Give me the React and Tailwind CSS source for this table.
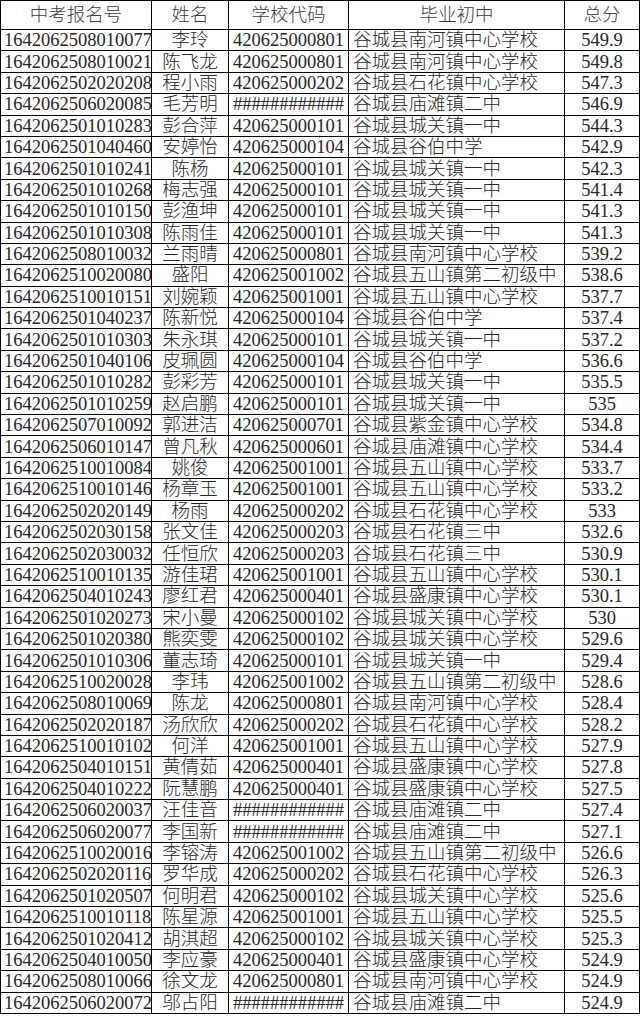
import React from "react";

const rows = [
  ["1642062508010077", "李玲", "420625000801", "谷城县南河镇中心学校", "549.9"],
  ["1642062508010021", "陈飞龙", "420625000801", "谷城县南河镇中心学校", "549.8"],
  ["1642062502020208", "程小雨", "420625000202", "谷城县石花镇中心学校", "547.3"],
  ["1642062506020085", "毛芳明", "############", "谷城县庙滩镇二中", "546.9"],
  ["1642062501010283", "彭合萍", "420625000101", "谷城县城关镇一中", "544.3"],
  ["1642062501040460", "安婷怡", "420625000104", "谷城县谷伯中学", "542.9"],
  ["1642062501010241", "陈杨", "420625000101", "谷城县城关镇一中", "542.3"],
  ["1642062501010268", "梅志强", "420625000101", "谷城县城关镇一中", "541.4"],
  ["1642062501010150", "彭渔坤", "420625000101", "谷城县城关镇一中", "541.3"],
  ["1642062501010308", "陈雨佳", "420625000101", "谷城县城关镇一中", "541.3"],
  ["1642062508010032", "兰雨晴", "420625000801", "谷城县南河镇中心学校", "539.2"],
  ["1642062510020080", "盛阳", "420625001002", "谷城县五山镇第二初级中", "538.6"],
  ["1642062510010151", "刘婉颖", "420625001001", "谷城县五山镇中心学校", "537.7"],
  ["1642062501040237", "陈新悦", "420625000104", "谷城县谷伯中学", "537.4"],
  ["1642062501010303", "朱永琪", "420625000101", "谷城县城关镇一中", "537.2"],
  ["1642062501040106", "皮珮圆", "420625000104", "谷城县谷伯中学", "536.6"],
  ["1642062501010282", "彭彩芳", "420625000101", "谷城县城关镇一中", "535.5"],
  ["1642062501010259", "赵启鹏", "420625000101", "谷城县城关镇一中", "535"],
  ["1642062507010092", "郭进洁", "420625000701", "谷城县紫金镇中心学校", "534.8"],
  ["1642062506010147", "曾凡秋", "420625000601", "谷城县庙滩镇中心学校", "534.4"],
  ["1642062510010084", "姚俊", "420625001001", "谷城县五山镇中心学校", "533.7"],
  ["1642062510010146", "杨章玉", "420625001001", "谷城县五山镇中心学校", "533.2"],
  ["1642062502020149", "杨雨", "420625000202", "谷城县石花镇中心学校", "533"],
  ["1642062502030158", "张文佳", "420625000203", "谷城县石花镇三中", "532.6"],
  ["1642062502030032", "任恒欣", "420625000203", "谷城县石花镇三中", "530.9"],
  ["1642062510010135", "游佳珺", "420625001001", "谷城县五山镇中心学校", "530.1"],
  ["1642062504010243", "廖红君", "420625000401", "谷城县盛康镇中心学校", "530.1"],
  ["1642062501020273", "宋小曼", "420625000102", "谷城县城关镇中心学校", "530"],
  ["1642062501020380", "熊奕雯", "420625000102", "谷城县城关镇中心学校", "529.6"],
  ["1642062501010306", "董志琦", "420625000101", "谷城县城关镇一中", "529.4"],
  ["1642062510020028", "李玮", "420625001002", "谷城县五山镇第二初级中", "528.6"],
  ["1642062508010069", "陈龙", "420625000801", "谷城县南河镇中心学校", "528.4"],
  ["1642062502020187", "汤欣欣", "420625000202", "谷城县石花镇中心学校", "528.2"],
  ["1642062510010102", "何洋", "420625001001", "谷城县五山镇中心学校", "527.9"],
  ["1642062504010151", "黄倩茹", "420625000401", "谷城县盛康镇中心学校", "527.8"],
  ["1642062504010222", "阮慧鹏", "420625000401", "谷城县盛康镇中心学校", "527.5"],
  ["1642062506020037", "汪佳音", "############", "谷城县庙滩镇二中", "527.4"],
  ["1642062506020077", "李国新", "############", "谷城县庙滩镇二中", "527.1"],
  ["1642062510020016", "李镕涛", "420625001002", "谷城县五山镇第二初级中", "526.6"],
  ["1642062502020116", "罗华成", "420625000202", "谷城县石花镇中心学校", "526.3"],
  ["1642062501020507", "何明君", "420625000102", "谷城县城关镇中心学校", "525.6"],
  ["1642062510010118", "陈星源", "420625001001", "谷城县五山镇中心学校", "525.5"],
  ["1642062501020412", "胡淇超", "420625000102", "谷城县城关镇中心学校", "525.3"],
  ["1642062504010050", "李应豪", "420625000401", "谷城县盛康镇中心学校", "524.9"],
  ["1642062508010066", "徐文龙", "420625000801", "谷城县南河镇中心学校", "524.9"],
  ["1642062506020072", "邬占阳", "############", "谷城县庙滩镇二中", "524.9"],
];

const cell = "border border-black p-0 whitespace-nowrap overflow-hidden align-middle";

export default function App() {
  return (
    <div className="bg-white w-[641px] min-h-[1016px] overflow-hidden">
      <table
        className="table-fixed border-collapse w-[639px] text-[18.5px] leading-[20px] font-light text-[#262626]"
        style={{ fontFamily: "'Liberation Serif', 'Noto Sans CJK SC', serif" }}
      >
        <colgroup>
          <col className="w-[151px]" />
          <col className="w-[77px]" />
          <col className="w-[120px]" />
          <col className="w-[216px]" />
          <col className="w-[75px]" />
        </colgroup>
        <thead>
          <tr className="h-[29px] text-[#3c3c3c]">
            <th className={`${cell} font-light text-center`}>中考报名号</th>
            <th className={`${cell} font-light text-center`}>姓名</th>
            <th className={`${cell} font-light text-center`}>学校代码</th>
            <th className={`${cell} font-light text-center`}>毕业初中</th>
            <th className={`${cell} font-light text-center`}>总分</th>
          </tr>
        </thead>
        <tbody>
          {rows.map((r, i) => (
            <tr key={i} className="h-[21.4px]">
              <td className={`${cell} pl-[3px] text-left`}>{r[0]}</td>
              <td className={`${cell} text-center`}>{r[1]}</td>
              <td className={`${cell} text-center`}>{r[2]}</td>
              <td className={`${cell} pl-[4px] text-left`}>{r[3]}</td>
              <td className={`${cell} text-center`}>{r[4]}</td>
            </tr>
          ))}
        </tbody>
      </table>
    </div>
  );
}
